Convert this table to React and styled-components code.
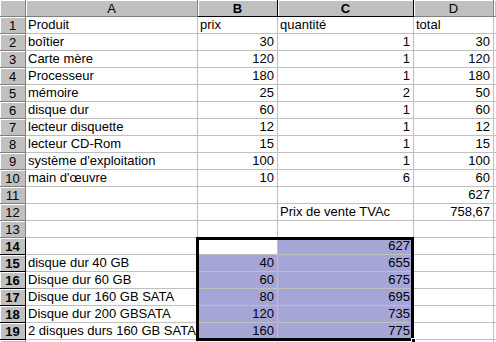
import React from 'react';
import styled, { createGlobalStyle } from 'styled-components';

const GlobalStyle = createGlobalStyle`
  html, body {
    margin: 0;
    padding: 0;
    background: #fff;
    overflow: hidden;
  }
  body {
    font-family: "Liberation Sans", Arial, sans-serif;
    font-size: 13px;
  }
`;

// only A..D are wide enough to show a label; E is a sliver at the edge
const columns = ['A', 'B', 'C', 'D', ''];

// rows of the sheet: [A, B, C, D]
const rows = [
  ['Produit', 'prix', 'quantité', 'total'],
  ['boîtier', 30, 1, 30],
  ['Carte mère', 120, 1, 120],
  ['Processeur', 180, 1, 180],
  ['mémoire', 25, 2, 50],
  ['disque dur', 60, 1, 60],
  ['lecteur disquette', 12, 1, 12],
  ['lecteur CD-Rom', 15, 1, 15],
  ["système d'exploitation", 100, 1, 100],
  ["main d'œuvre", 10, 6, 60],
  ['', '', '', 627],
  ['', '', 'Prix de vente TVAc', '758,67'],
  ['', '', '', ''],
  ['', '', 627, ''],
  ['disque dur 40 GB', 40, 655, ''],
  ['Disque dur 60 GB', 60, 675, ''],
  ['Disque dur 160 GB SATA', 80, 695, ''],
  ['Disque dur 200 GBSATA', 120, 735, ''],
  ['2 disques durs 160 GB SATA', 160, 775, ''],
  ['', '', '', ''],
];

const VISIBLE_ROWS = 19;

// selection B14:C19, active cell B14
const isSelected = (r, c) => r >= 14 && r <= 19 && (c === 1 || c === 2);
const isActive = (r, c) => r === 14 && c === 1;

const App = () => (
  <>
    <GlobalStyle />
    <Sheet>
      <Corner />
      {columns.map((col, i) => (
        <ColHeader key={i} $selected={i === 1 || i === 2}>
          {col}
        </ColHeader>
      ))}

      {rows.map((row, r) => {
        const n = r + 1;
        return (
          <React.Fragment key={n}>
            <RowHeader $selected={n >= 14 && n <= 19}>
              {n <= VISIBLE_ROWS ? n : ''}
            </RowHeader>
            {row.map((value, c) =>
              isActive(n, c) ? (
                <ActiveCell key={c}>
                  <SelectionFrame>
                    <FillHandle />
                  </SelectionFrame>
                </ActiveCell>
              ) : (
                <Cell
                  key={c}
                  $numeric={typeof value === 'number' || value === '758,67'}
                  $selected={isSelected(n, c)}
                >
                  {value}
                </Cell>
              )
            )}
            <Cell />
          </React.Fragment>
        );
      })}
    </Sheet>
  </>
);

export default App;

const Sheet = styled.div`
  display: grid;
  grid-template-columns: 26px 172px 80px 136px 80px 1fr;
  grid-auto-rows: 17px;
  width: 496px;
  height: 342px;
  overflow: hidden;
  color: #000;
`;

const HeaderBase = styled.div`
  box-sizing: border-box;
  background: #c0c0c0;
  border-right: 1px solid #808080;
  border-bottom: 1px solid #808080;
  box-shadow: inset 1px 1px 0 #fff;
  text-align: center;
  line-height: 17px;
  white-space: nowrap;
  overflow: hidden;
`;

const Corner = styled(HeaderBase)``;

const ColHeader = styled(HeaderBase)`
  font-weight: ${(p) => (p.$selected ? 'bold' : 'normal')};
  border-bottom-color: ${(p) => (p.$selected ? '#000' : '#808080')};
  border-right-color: ${(p) => (p.$selected ? '#000' : '#808080')};
`;

const RowHeader = styled(HeaderBase)`
  font-weight: ${(p) => (p.$selected ? 'bold' : 'normal')};
  border-right-color: ${(p) => (p.$selected ? '#000' : '#808080')};
  border-bottom-color: ${(p) => (p.$selected ? '#000' : '#808080')};
`;

const Cell = styled.div`
  box-sizing: border-box;
  border-right: 1px solid #c0c0c0;
  border-bottom: 1px solid #c0c0c0;
  background: ${(p) => (p.$selected ? '#a6a6d6' : '#fff')};
  padding: 0 3px 0 2px;
  line-height: 16px;
  text-align: ${(p) => (p.$numeric ? 'right' : 'left')};
  white-space: nowrap;
  overflow: hidden;
`;

const ActiveCell = styled.div`
  position: relative;
  box-sizing: border-box;
  border-right: 1px solid #c0c0c0;
  border-bottom: 1px solid #c0c0c0;
  background: #fff;
`;

/* thick frame around B14:C19, drawn over the cells from the active one */
const SelectionFrame = styled.div`
  position: absolute;
  left: -2px;
  top: -1px;
  width: 218px;
  height: 104px;
  box-sizing: border-box;
  border: 3px solid #000;
  pointer-events: none;
  z-index: 1;
`;

const FillHandle = styled.div`
  position: absolute;
  right: -5px;
  bottom: -5px;
  width: 3px;
  height: 3px;
  background: #000;
  border: 1px solid #fff;
`;
